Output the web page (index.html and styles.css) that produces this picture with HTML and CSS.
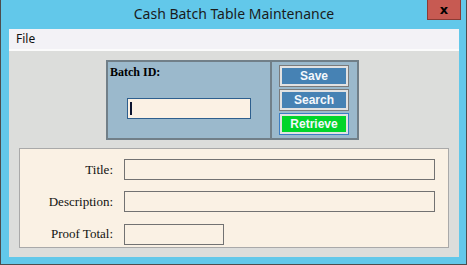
FILE: index.html
```html
<!DOCTYPE html>
<html lang="en">
<head>
  <meta charset="UTF-8">
  <title>Cash Batch Table Maintenance</title>
  <link rel="stylesheet" href="styles.css">
</head>
<body>
  <div class="window">
    <div class="titlebar">
      <span class="title">Cash Batch Table Maintenance</span>
      <button class="close">x</button>
    </div>

    <div class="menubar">
      <span class="menu-item">File</span>
    </div>

    <div class="content">
      <div class="batch">
        <div class="batch-left">
          <label class="batch-label" for="batchId">Batch ID:</label>
          <div class="batch-input">
            <span class="caret"></span>
          </div>
        </div>
        <div class="batch-buttons">
          <button class="btn">Save</button>
          <button class="btn">Search</button>
          <button class="btn btn-retrieve">Retrieve</button>
        </div>
      </div>

      <div class="details">
        <label class="field-label">Title:</label>
        <div class="field field-wide"></div>
        <label class="field-label">Description:</label>
        <div class="field field-wide"></div>
        <label class="field-label">Proof Total:</label>
        <div class="field field-short"></div>
      </div>
    </div>
  </div>
</body>
</html>
```

FILE: styles.css
```css
body {
  margin: 0;
  background: #ffffff;
}

.window {
  position: relative;
  width: 467px;
  height: 265px;
  box-sizing: border-box;
  background: #62c8ea;
  border: 1px solid #4d4d4d;
  border-top: none;
  padding: 0 7px 7px 8px;
}

.titlebar {
  height: 29px;
  display: flex;
  align-items: center;
  justify-content: center;
}

.title {
  font-family: "Noto Sans", sans-serif;
  font-size: 14px;
  color: #1b1b1b;
  margin-top: -3px;
}

.close {
  position: absolute;
  top: 0;
  right: 5px;
  width: 34px;
  height: 20px;
  padding: 0;
  background: #c75a52;
  border: 1px solid #8a3b35;
  border-top: none;
  font-family: "DejaVu Sans", sans-serif;
  font-weight: bold;
  font-size: 13px;
  line-height: 16px;
  color: #000;
}

.menubar {
  height: 20px;
  background: #f3f2f6;
  border-bottom: 2px solid #fbfbfb;
  padding-left: 7px;
  font-family: "Noto Sans", sans-serif;
  font-size: 12px;
  line-height: 20px;
  color: #111;
}

.content {
  height: 206px;
  box-sizing: border-box;
  background: #dcdddb;
  padding-top: 9px;
}

/* batch id block */
.batch {
  display: flex;
  width: 253px;
  height: 80px;
  box-sizing: border-box;
  margin-left: 97px;
  background: #9bb9cc;
  border: 2px solid #717f88;
}

.batch-left {
  width: 164px;
  border-right: 2px solid #717f88;
  padding: 3px 0 0 2px;
  box-sizing: border-box;
}

.batch-label {
  display: block;
  font-family: "Liberation Serif", serif;
  font-weight: bold;
  font-size: 12px;
  color: #000;
}

.batch-input {
  width: 124px;
  height: 21px;
  box-sizing: border-box;
  margin: 18px 0 0 17px;
  background: #fbf1e4;
  border: 1px solid #2e5f8e;
  padding: 3px 0 0 2px;
}

.caret {
  display: block;
  width: 2px;
  height: 13px;
  background: #0c1430;
}

.batch-buttons {
  display: flex;
  flex-direction: column;
  gap: 2px;
  padding: 3px 0 0 7px;
}

.btn {
  width: 70px;
  height: 22px;
  box-sizing: border-box;
  padding: 0;
  background: #4682b4;
  border: 1px solid #7b7b7b;
  box-shadow: inset 0 0 0 2px #e2e2e2;
  font-family: "Liberation Sans", sans-serif;
  font-weight: bold;
  font-size: 12px;
  color: #f4f8fc;
}

.btn-retrieve {
  background: #00d52a;
  border-color: #3b7ec4;
}

/* details block */
.details {
  display: grid;
  grid-template-columns: 93px auto;
  column-gap: 11px;
  row-gap: 7px;
  align-items: center;
  justify-items: start;
  width: 430px;
  height: 100px;
  box-sizing: border-box;
  margin: 8px 0 0 10px;
  padding: 8px 0 0 0;
  background: #faf1e4;
  border: 1px solid #a9a9a9;
}

.field-label {
  justify-self: end;
  font-family: "Liberation Serif", serif;
  font-size: 13px;
  color: #111;
}

.field {
  height: 21px;
  box-sizing: border-box;
  border: 1px solid #727272;
  background: #faf1e4;
}

.field-wide {
  width: 311px;
}

.field-short {
  width: 100px;
}
```
